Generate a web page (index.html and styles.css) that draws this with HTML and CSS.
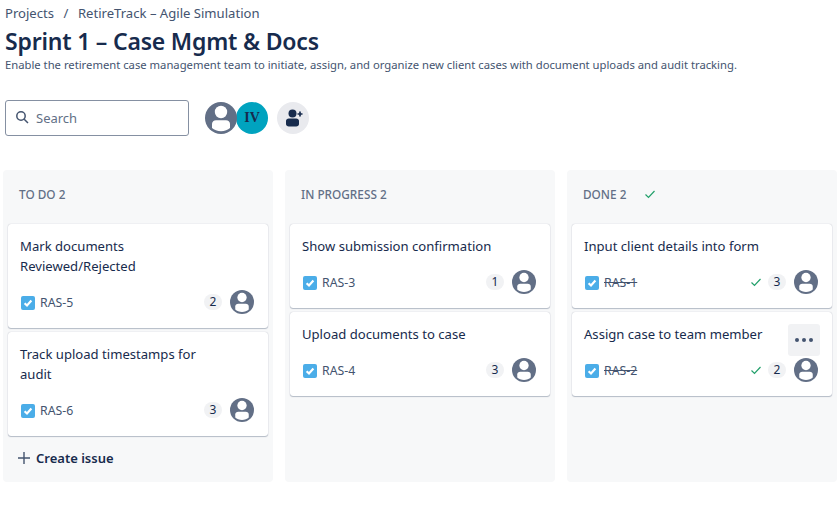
FILE: index.html
```html
<!DOCTYPE html>
<html lang="en">
  <head>
    <meta charset="UTF-8" />
    <title>Sprint 1 – Case Mgmt &amp; Docs</title>
    <link rel="stylesheet" href="styles.css">
  </head>
  <body>
    <svg class="defs" width="0" height="0">
      <symbol id="user" viewBox="0 0 32 32">
        <circle cx="16" cy="16" r="16" fill="#626f86" />
        <circle cx="16" cy="10" r="6.200" fill="#fff" />
        <path d="M7 22c0-2.500 1.800-3.800 4-3.800h10c2.200 0 4 1.300 4 3.800v4c-2 2-5.500 3.200-9 3.200s-7-1.200-9-3.200z" fill="#fff" />
      </symbol>
      <symbol id="story" viewBox="0 0 14 14">
        <rect width="14" height="14" rx="2" fill="#4bade8" />
        <path d="M3.600 7.200l2.400 2.300 4.400-4.900" fill="none" stroke="#fff" stroke-width="2.200" />
      </symbol>
      <symbol id="tick" viewBox="0 0 12 12">
        <path d="M1.500 6.500l3 3 6-6.500" fill="none" stroke="#22a06b" stroke-width="1.200" />
      </symbol>
    </svg>

    <div class="crumbs">
      <span>Projects</span>
      <span class="sep">/</span>
      <span>RetireTrack – Agile Simulation</span>
    </div>
    <h1>Sprint 1 – Case Mgmt &amp; Docs</h1>
    <p class="goal">Enable the retirement case management team to initiate, assign, and organize new client cases with document uploads and audit tracking.</p>

    <div class="toolbar">
      <div class="search">
        <svg width="16" height="16" viewBox="0 0 16 16"><circle cx="6" cy="6" r="4.200" fill="none" stroke="#44546f" stroke-width="1.500" /><path d="M9.200 9.200l3.800 3.800" stroke="#44546f" stroke-width="1.500" /></svg>
        <span>Search</span>
      </div>
      <div class="people">
        <svg class="face" width="32" height="32"><use href="#user" /></svg>
        <div class="initials">IV</div>
      </div>
      <div class="add-person">
        <svg width="20" height="20" viewBox="0 0 20 20"><circle cx="9.500" cy="5.500" r="4" fill="#172b4d" /><path d="M3 13c0-1.600 1.200-2.500 2.800-2.500h7.400c1.600 0 2.800.9 2.800 2.500v3c0 1.500-1.200 2.500-2.800 2.500H5.800C4.200 18.500 3 17.500 3 16z" fill="#172b4d" /><path d="M14.500 6h5M17 3.500v5" stroke="#172b4d" stroke-width="1.700" /></svg>
      </div>
    </div>

    <div class="board">
      <section class="column">
        <div class="column-head">TO DO 2</div>
        <div class="card">
          <div class="summary">Mark documents<br>Reviewed/Rejected</div>
          <div class="meta">
            <svg class="story" width="14" height="14"><use href="#story" /></svg>
            <span class="key">RAS-5</span>
            <span class="points">2</span>
            <svg class="avatar" width="24" height="24"><use href="#user" /></svg>
          </div>
        </div>
        <div class="card">
          <div class="summary">Track upload timestamps for<br>audit</div>
          <div class="meta">
            <svg class="story" width="14" height="14"><use href="#story" /></svg>
            <span class="key">RAS-6</span>
            <span class="points">3</span>
            <svg class="avatar" width="24" height="24"><use href="#user" /></svg>
          </div>
        </div>
        <div class="create">
          <svg width="16" height="16" viewBox="0 0 16 16"><path d="M8 2v12M2 8h12" stroke="#44546f" stroke-width="1.400" /></svg>
          <span>Create issue</span>
        </div>
      </section>

      <section class="column">
        <div class="column-head">IN PROGRESS 2</div>
        <div class="card">
          <div class="summary">Show submission confirmation</div>
          <div class="meta">
            <svg class="story" width="14" height="14"><use href="#story" /></svg>
            <span class="key">RAS-3</span>
            <span class="points">1</span>
            <svg class="avatar" width="24" height="24"><use href="#user" /></svg>
          </div>
        </div>
        <div class="card">
          <div class="summary">Upload documents to case</div>
          <div class="meta">
            <svg class="story" width="14" height="14"><use href="#story" /></svg>
            <span class="key">RAS-4</span>
            <span class="points">3</span>
            <svg class="avatar" width="24" height="24"><use href="#user" /></svg>
          </div>
        </div>
      </section>

      <section class="column">
        <div class="column-head">DONE 2 <svg class="head-tick" width="12" height="12"><use href="#tick" /></svg></div>
        <div class="card">
          <div class="summary">Input client details into form</div>
          <div class="meta">
            <svg class="story" width="14" height="14"><use href="#story" /></svg>
            <span class="key done">RAS-1</span>
            <svg class="tick" width="12" height="12"><use href="#tick" /></svg>
            <span class="points">3</span>
            <svg class="avatar" width="24" height="24"><use href="#user" /></svg>
          </div>
        </div>
        <div class="card">
          <div class="summary">Assign case to team member</div>
          <div class="more"><i></i><i></i><i></i></div>
          <div class="meta">
            <svg class="story" width="14" height="14"><use href="#story" /></svg>
            <span class="key done">RAS-2</span>
            <svg class="tick" width="12" height="12"><use href="#tick" /></svg>
            <span class="points">2</span>
            <svg class="avatar" width="24" height="24"><use href="#user" /></svg>
          </div>
        </div>
      </section>
    </div>
  </body>
</html>
```

FILE: styles.css
```css
body {
  margin: 0;
  padding: 4px 0 0 5px;
  font-family: "Noto Sans", "Open Sans", sans-serif;
  color: #172b4d;
  background: #fff;
  overflow: hidden;
}
.defs {
  position: absolute;
}
svg {
  display: block;
  flex: none;
}
.crumbs {
  display: flex;
  gap: 8.500px;
  height: 18px;
  font-size: 13.100px;
  line-height: 18px;
  color: #44546f;
}
.crumbs .sep {
  margin: 0 1px;
}
h1 {
  margin: 3px 0 0;
  font-size: 23px;
  line-height: 32px;
  font-weight: 600;
  letter-spacing: -0.2px;
}
.goal {
  margin: 1px 0 0;
  font-size: 11.250px;
  line-height: 14px;
  color: #44546f;
  white-space: nowrap;
}
.toolbar {
  display: flex;
  align-items: center;
  margin-top: 28px;
}
.search {
  display: flex;
  align-items: center;
  gap: 5px;
  box-sizing: border-box;
  width: 184px;
  height: 36px;
  padding-left: 9px;
  border: 1px solid #8590a2;
  border-radius: 3px;
  font-size: 13px;
  color: #626f86;
}
.people {
  display: flex;
  margin-left: 16px;
}
.face {
  position: relative;
  z-index: 1;
}
.initials {
  width: 32px;
  height: 32px;
  margin-left: -1px;
  border-radius: 50%;
  background: #00a3bf;
  font-family: "Liberation Serif", serif;
  font-size: 14px;
  font-weight: 700;
  line-height: 32px;
  text-align: center;
}
.add-person {
  display: flex;
  align-items: center;
  justify-content: center;
  width: 32px;
  height: 32px;
  margin-left: 9px;
  border-radius: 50%;
  background: #e9eaee;
}
.board {
  display: flex;
  gap: 12px;
  margin: 34px 0 0 -2px;
}
.column {
  box-sizing: border-box;
  width: 270px;
  height: 312px;
  padding: 0 5px;
  border-radius: 4px;
  background: #f7f8f9;
}
.column-head {
  display: flex;
  align-items: center;
  height: 48px;
  margin-bottom: 6px;
  padding-left: 11px;
  font-size: 11.800px;
  font-weight: 500;
  color: #626f86;
}
.head-tick {
  margin-left: 18px;
}
.card {
  position: relative;
  box-sizing: border-box;
  margin-bottom: 4px;
  padding: 12px 14px 14px 12px;
  border-radius: 3px;
  background: #fff;
  box-shadow: 0 1px 1px #091e4240, 0 0 1px #091e424f;
}
.summary {
  font-size: 13.100px;
  line-height: 20px;
  min-height: 20px;
}
.meta {
  display: flex;
  align-items: center;
  height: 24px;
  margin-top: 14px;
  font-size: 12.300px;
  color: #44546f;
}
.story {
  margin: 1px 0 0 1px;
}
.key {
  margin-left: 5px;
  margin-right: auto;
}
.key.done {
  text-decoration: line-through;
}
.tick {
  margin-right: 6px;
}
.points {
  width: 18px;
  height: 16px;
  margin-right: 8px;
  border-radius: 8px;
  background: #f1f2f4;
  font-size: 12px;
  line-height: 16px;
  text-align: center;
  color: #172b4d;
}
.more {
  position: absolute;
  top: 12px;
  right: 12px;
  z-index: 1;
  display: flex;
  align-items: center;
  justify-content: center;
  gap: 3px;
  width: 32px;
  height: 32px;
  border-radius: 3px;
  background: #f1f2f4;
}
.more i {
  width: 4px;
  height: 4px;
  border-radius: 50%;
  background: #44546f;
}
.create {
  display: flex;
  align-items: center;
  gap: 4px;
  height: 32px;
  margin-top: 6px;
  padding-left: 8px;
  font-size: 13px;
  font-weight: 600;
}
```
